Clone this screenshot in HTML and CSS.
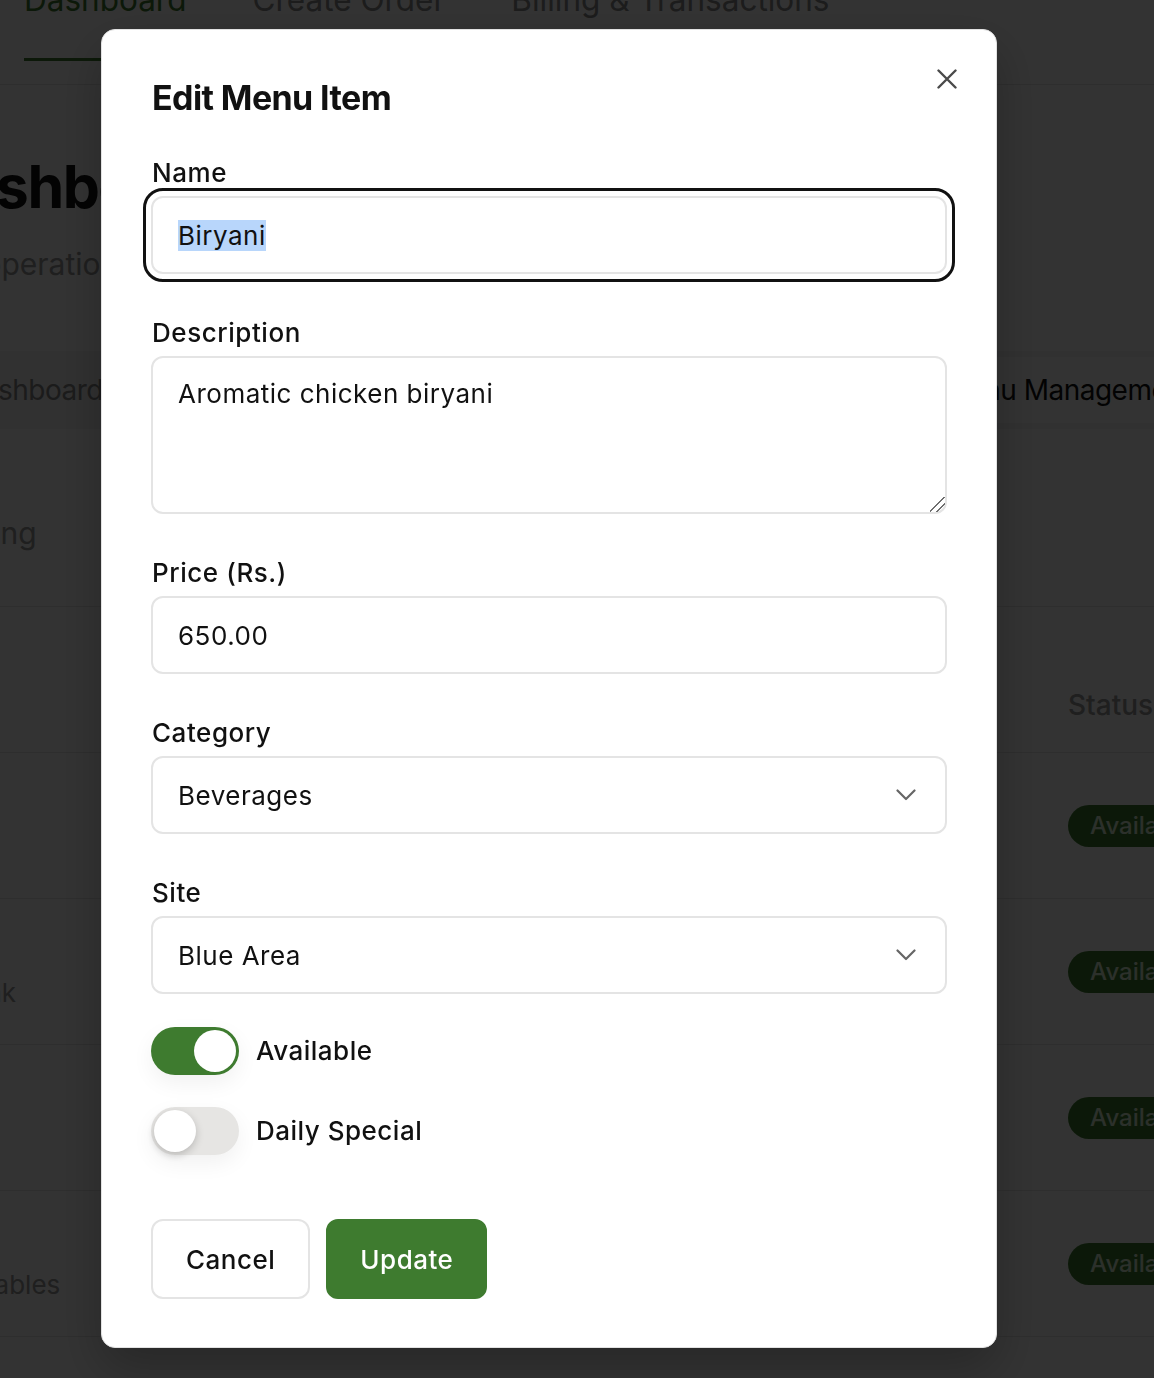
FILE: index.html
```html
<!DOCTYPE html>
<html lang="en">
<head>
<meta charset="utf-8">
<title>Edit Menu Item</title>
<link rel="stylesheet" href="styles.css">
</head>
<body>
<div class="page">
  <header class="topnav">
    <a class="nav-item active" href="#">Dashboard</a>
    <a class="nav-item" href="#">Create Order</a>
    <a class="nav-item" href="#">Billing &amp; Transactions</a>
  </header>
  <main class="main">
    <h1 class="page-title">Dashboard</h1>
    <p class="page-sub">Daily operations overview</p>
    <div class="tablist">
      <button class="tab" type="button">Dashboard</button>
      <button class="tab" type="button">Orders</button>
      <button class="tab" type="button">Billing</button>
      <button class="tab active" type="button">Menu Management</button>
    </div>
    <section class="card">
      <div class="card-head"><p class="card-title">Pricing</p></div>
      <div class="table-wrap">
        <table class="menu-table">
          <thead>
            <tr>
              <th class="col-item">Item</th>
              <th class="col-cat">Category</th>
              <th class="col-site">Site</th>
              <th class="col-price">Price</th>
              <th class="col-status">Status</th>
            </tr>
          </thead>
          <tbody>
            <tr>
              <td><div class="item-name">Biryani</div><div class="item-desc">Aromatic rice</div></td>
              <td>Main Course</td><td>Blue Area</td><td>650.00</td>
              <td><span class="badge">Available</span></td>
            </tr>
            <tr>
              <td><div class="item-name">Lassi</div><div class="item-desc">Mint yogurt drink</div></td>
              <td>Beverages</td><td>Blue Area</td><td>250.00</td>
              <td><span class="badge">Available</span></td>
            </tr>
            <tr>
              <td><div class="item-name">Naan</div><div class="item-desc">Soft bread</div></td>
              <td>Breads</td><td>Blue Area</td><td>60.00</td>
              <td><span class="badge">Available</span></td>
            </tr>
            <tr>
              <td><div class="item-name">Sabzi</div><div class="item-desc">Seasonal vegetables</div></td>
              <td>Sides</td><td>Blue Area</td><td>400.00</td>
              <td><span class="badge">Available</span></td>
            </tr>
            <tr>
              <td><div class="item-name">Karahi</div><div class="item-desc">Chicken karahi</div></td>
              <td>Main Course</td><td>Blue Area</td><td>1200.00</td>
              <td><span class="badge">Available</span></td>
            </tr>
          </tbody>
        </table>
      </div>
    </section>
  </main>
</div>

<div class="backdrop">
  <div class="modal" role="dialog" aria-labelledby="modal-title">
    <button class="close" type="button" aria-label="Close">
      <svg width="20" height="20" viewBox="0 0 20 20" fill="none" stroke="currentColor" stroke-width="2.4" stroke-linecap="round"><path d="M1.5 1.5 L18.5 18.5 M18.5 1.5 L1.5 18.5"/></svg>
    </button>
    <h2 class="modal-title" id="modal-title">Edit Menu Item</h2>
    <form class="form">
      <div class="field">
        <label class="label" for="name">Name</label>
        <input class="input is-focused" id="name" type="text" value="Biryani">
      </div>
      <div class="field">
        <label class="label" for="desc">Description</label>
        <textarea class="input textarea" id="desc">Aromatic chicken biryani</textarea>
      </div>
      <div class="field">
        <label class="label" for="price">Price (Rs.)</label>
        <input class="input" id="price" type="text" value="650.00">
      </div>
      <div class="field">
        <label class="label" for="category">Category</label>
        <div class="select-wrap">
          <select class="input select" id="category">
            <option>Beverages</option>
            <option>Main Course</option>
          </select>
          <svg class="chevron" width="20" height="12" viewBox="0 0 20 12" fill="none" stroke="currentColor" stroke-width="2.2" stroke-linecap="round" stroke-linejoin="round"><path d="M1.5 1.5 L10 10 L18.5 1.5"/></svg>
        </div>
      </div>
      <div class="field">
        <label class="label" for="site">Site</label>
        <div class="select-wrap">
          <select class="input select" id="site">
            <option>Blue Area</option>
            <option>F-7 Markaz</option>
          </select>
          <svg class="chevron" width="20" height="12" viewBox="0 0 20 12" fill="none" stroke="currentColor" stroke-width="2.2" stroke-linecap="round" stroke-linejoin="round"><path d="M1.5 1.5 L10 10 L18.5 1.5"/></svg>
        </div>
      </div>
      <div class="toggles">
        <label class="switch">
          <input type="checkbox" checked>
          <span class="track"><span class="knob"></span></span>
          <span class="switch-text">Available</span>
        </label>
        <label class="switch">
          <input type="checkbox">
          <span class="track"><span class="knob"></span></span>
          <span class="switch-text">Daily Special</span>
        </label>
      </div>
      <div class="actions">
        <button class="btn btn-outline" type="button">Cancel</button>
        <button class="btn btn-primary" type="submit">Update</button>
      </div>
    </form>
  </div>
</div>
<script src="script.js"></script>
</body>
</html>
```

FILE: styles.css
```css
* { box-sizing: border-box; }

html, body {
  margin: 0;
  height: 100%;
  overflow: hidden;
}

body {
  background: #fff;
  font-family: Inter, "Noto Sans", "Liberation Sans", sans-serif;
  color: #111;
}

/* ---------- background page ---------- */
.topnav {
  display: flex;
  gap: 66px;
  margin-top: -24px;
  padding: 0 24px 23px;
  border-bottom: 1px solid #e5e5e5;
}

.nav-item {
  font-size: 31.5px;
  line-height: 48px;
  color: #8a8a8a;
  text-decoration: none;
  padding-bottom: 34px;
  border-bottom: 3px solid transparent;
}

.nav-item.active {
  color: #3e7b2f;
  border-bottom-color: #3e7b2f;
}

.main {
  margin-left: -78px;
  width: 1311px;
  padding-top: 66px;
}

.page-title {
  margin: 0;
  font-size: 59px;
  line-height: 71px;
  font-weight: 700;
  letter-spacing: -1.5px;
  color: #111;
}

.page-sub {
  margin: 20px 0 0 -17px;
  font-size: 30px;
  line-height: 45px;
  color: #999;
}

.tablist {
  margin-top: 64px;
  display: flex;
  padding: 6px;
  background: #f4f4f5;
  border-radius: 14px;
}

.tab {
  font: inherit;
  font-size: 28px;
  line-height: 42px;
  letter-spacing: -0.5px;
  padding: 12px 35px;
  border: 0;
  border-radius: 10px;
  background: none;
  color: #888;
}

.tab.active {
  margin-left: auto;
  background: #fff;
  color: #111;
}

.card {
  margin-top: 31px;
}

.card-head {
  padding: 51px 16px 50px;
  border-bottom: 1px solid #e5e5e5;
}

.card-title {
  margin: 0;
  font-size: 30px;
  line-height: 45px;
  color: #999;
}

.table-wrap {
  overflow: hidden;
}

.menu-table {
  margin-left: -140px;
  width: 1562px;
  border-collapse: collapse;
  table-layout: fixed;
}

.col-item { width: 420px; }
.col-cat { width: 300px; }
.col-site { width: 300px; }
.col-price { width: 242px; }
.col-status { width: 300px; }

.menu-table th {
  padding: 77px 24px 26px;
  font-size: 28px;
  line-height: 42px;
  font-weight: 500;
  color: #999;
  text-align: left;
  border-bottom: 1px solid #e5e5e5;
}

.menu-table td {
  padding: 34px 24px 33px;
  font-size: 26px;
  line-height: 36px;
  color: #333;
  border-bottom: 1px solid #e5e5e5;
  vertical-align: middle;
}

.item-name {
  font-size: 28px;
  line-height: 42px;
  font-weight: 600;
  color: #111;
}

.item-desc {
  font-size: 26px;
  line-height: 36px;
  color: #999;
  white-space: nowrap;
}

.badge {
  display: inline-block;
  padding: 0 22px;
  font-size: 24px;
  line-height: 42px;
  font-weight: 500;
  border-radius: 21px;
  background: #3e7b2f;
  color: #dcefd6;
}

/* ---------- modal ---------- */
.backdrop {
  position: fixed;
  inset: 0;
  display: flex;
  align-items: flex-start;
  padding: 29px 157px 0 101px;
  background: rgba(0, 0, 0, 0.8);
}

.modal {
  position: relative;
  width: 896px;
  padding: 50px 49px 48px;
  background: #fff;
  border: 1px solid #e2e2e2;
  border-radius: 14px;
  box-shadow: 0 20px 50px rgba(0, 0, 0, 0.25);
}

.close {
  position: absolute;
  top: 33px;
  right: 33px;
  width: 32px;
  height: 32px;
  padding: 0;
  display: flex;
  align-items: center;
  justify-content: center;
  border: 0;
  background: none;
  color: #4a4a4a;
  cursor: pointer;
}

.modal-title {
  margin: 0 0 34px 1px;
  font-size: 34px;
  line-height: 36px;
  font-weight: 700;
  letter-spacing: -0.6px;
  color: #111;
}

.field {
  margin-bottom: 36px;
}

.label {
  display: block;
  padding-left: 1px;
  font-size: 26px;
  line-height: 46px;
  font-weight: 500;
  letter-spacing: 0.55px;
  color: #111;
}

.input {
  display: block;
  width: 100%;
  height: 78px;
  margin: 0;
  padding: 0 25px;
  font: inherit;
  font-size: 26px;
  letter-spacing: 0.5px;
  color: #111;
  background: #fff;
  border: 2px solid #e4e4e4;
  border-radius: 12px;
  outline: none;
}

.input.is-focused,
.input.is-focused:focus {
  outline: 3px solid #111;
  outline-offset: 5px;
}

.input::selection {
  background: #b8d6fb;
  color: #111;
}

.textarea {
  height: 158px;
  padding: 16px 25px;
  line-height: 39px;
  resize: vertical;
}

.textarea::-webkit-resizer {
  background:
    linear-gradient(135deg,
      transparent 0 44%,
      #6f6f6f 44% 52%,
      transparent 52% 68%,
      #6f6f6f 68% 76%,
      transparent 76%);
}

.select-wrap {
  position: relative;
}

.select {
  appearance: none;
  -webkit-appearance: none;
  cursor: pointer;
}

.chevron {
  position: absolute;
  top: 33px;
  right: 31px;
  color: #666;
  pointer-events: none;
}

.toggles {
  margin-top: -3px;
  display: flex;
  flex-direction: column;
  gap: 32px;
}

.switch {
  display: flex;
  align-items: center;
  gap: 17px;
  font-size: 26px;
  line-height: 48px;
  font-weight: 500;
  letter-spacing: 0.5px;
  cursor: pointer;
}

.switch input {
  position: absolute;
  width: 0;
  height: 0;
  opacity: 0;
}

.track {
  flex: none;
  display: flex;
  justify-content: flex-start;
  width: 88px;
  height: 48px;
  padding: 3px;
  border-radius: 24px;
  background: #e6e5e3;
  box-shadow: 0 8px 22px rgba(0, 0, 0, 0.06);
}

.knob {
  width: 42px;
  height: 42px;
  border-radius: 50%;
  background: #fff;
  box-shadow: 0 3px 8px rgba(0, 0, 0, 0.2);
}

.switch input:checked + .track {
  justify-content: flex-end;
  background: #3e7b2f;
}

.switch input:checked + .track .knob {
  box-shadow: none;
}

.actions {
  margin-top: 64px;
  display: flex;
  gap: 16px;
}

.btn {
  height: 80px;
  padding: 0 33px;
  font: inherit;
  font-size: 26px;
  font-weight: 500;
  letter-spacing: 0.5px;
  border-radius: 12px;
  cursor: pointer;
}

.btn-outline {
  background: #fff;
  color: #111;
  border: 2px solid #e4e4e4;
}

.btn-primary {
  padding: 0 32px;
  background: #3e7b2f;
  color: #fff;
  border: 2px solid #3e7b2f;
}
```

FILE: script.js
```js
var nameInput = document.getElementById('name');
nameInput.focus();
nameInput.setSelectionRange(0, nameInput.value.length);
```
